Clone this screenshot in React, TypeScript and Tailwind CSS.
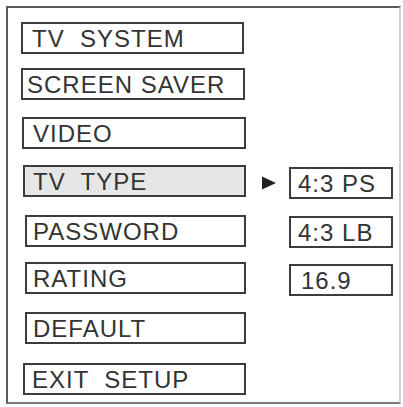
import React from "react";

const font = { fontFamily: '"Liberation Sans", Arial, Helvetica, sans-serif' };

function Box({ label, className = "" }: { label: string; className?: string }) {
  return (
    <div
      className={`h-[32px] border-2 border-[#3c3c3c] flex items-center text-[24px] leading-[28px] tracking-[1px] text-[#333333] whitespace-pre pt-[1px] ${className}`}
    >
      {label}
    </div>
  );
}

export default function App() {
  return (
    <div className="w-[403px] h-[407px] bg-white pt-[6px] pl-[6px]" style={font}>
      <div className="w-[395px] h-[398px] border-l-2 border-t-2 border-[#5a5a5a] border-r-2 border-r-[#d0d0d0] border-b-2 border-b-[#7a7a7a] flex flex-col pt-[14px]">
        <div className="flex">
          <Box label="TV  SYSTEM" className="ml-[13px] w-[223px] pl-[9px]" />
        </div>
        <div className="flex mt-[14px]">
          <Box label="SCREEN SAVER" className="ml-[13px] w-[224px] pl-[4px]" />
        </div>
        <div className="flex mt-[17px]">
          <Box label="VIDEO" className="ml-[14px] w-[224px] pl-[9px]" />
        </div>
        <div className="flex mt-[16px] items-start">
          <Box label="TV  TYPE" className="ml-[15px] w-[223px] pl-[8px] bg-[#e6e6e6]" />
          <svg className="ml-[16px] mt-[11px]" width="14" height="14" viewBox="0 0 14 14">
            <polygon points="0,0.5 14,7 0,13.5" fill="#222222" />
          </svg>
          <Box label="4:3 PS" className="ml-[13px] mt-[2px] w-[104px] pl-[7px]" />
        </div>
        <div className="flex mt-[16px] items-start">
          <Box label="PASSWORD" className="ml-[17px] w-[221px] pl-[6px]" />
          <Box label="4:3 LB" className="ml-[43px] mt-[1px] w-[104px] pl-[7px]" />
        </div>
        <div className="flex mt-[14px] items-start">
          <Box label="RATING" className="ml-[17px] w-[221px] pl-[6px]" />
          <Box label="16.9" className="ml-[43px] mt-[2px] w-[104px] pl-[10px]" />
        </div>
        <div className="flex mt-[16px]">
          <Box label="DEFAULT" className="ml-[17px] w-[221px] pl-[6px]" />
        </div>
        <div className="flex mt-[19px]">
          <Box label="EXIT  SETUP" className="ml-[15px] w-[223px] pl-[7px]" />
        </div>
      </div>
    </div>
  );
}
